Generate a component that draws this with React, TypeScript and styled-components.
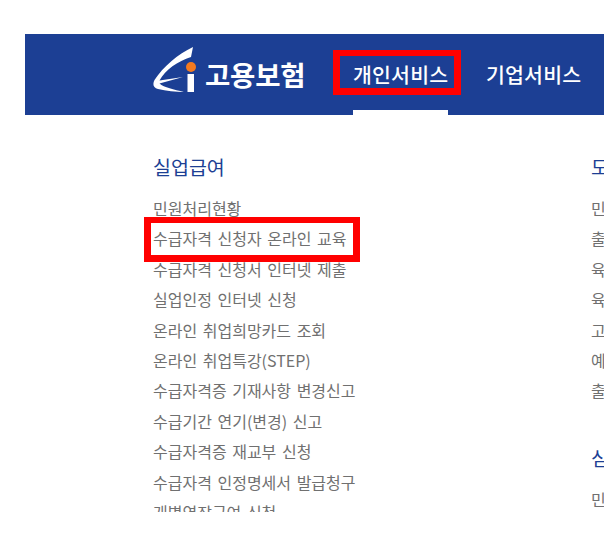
import styled, { createGlobalStyle } from "styled-components";

const GlobalStyle = createGlobalStyle`
  html, body {
    margin: 0;
    padding: 0;
    background: #fff;
    font-family: "Noto Sans CJK KR", "Noto Sans", sans-serif;
  }
`;

const Page = styled.div`
  position: relative;
  width: 611px;
  height: 549px;
  padding: 34px 7px 0 25px;
  box-sizing: border-box;
  overflow: hidden;
`;

const Frame = styled.div`
  height: 478px;
  overflow: hidden;
`;

const Header = styled.header`
  display: flex;
  align-items: center;
  height: 81px;
  padding-left: 128px;
  background: #1c3f94;
  box-shadow: 0 -1px 0 #9db4d8;
`;

const Logo = styled.div`
  display: flex;
  align-items: center;
  width: 200px;
  gap: 6px;
`;

const LogoSvg = styled.svg`
  flex: none;
  margin-bottom: 9px;
`;

const LogoText = styled.span`
  color: #fff;
  font-size: 27.5px;
  font-weight: 700;
  letter-spacing: -0.2px;
  white-space: nowrap;
  line-height: 1;
  margin-top: 1px;
`;

const Nav = styled.nav`
  display: flex;
  gap: 38px;
  height: 100%;
`;

const NavItem = styled.a<{ $active?: boolean }>`
  display: flex;
  align-items: center;
  color: #fff;
  font-size: 20.5px;
  font-weight: 500;
  letter-spacing: 0.2px;
  white-space: nowrap;
  padding-top: 4px;
  box-sizing: border-box;
  height: 81px;
  width: 95px;
  border-bottom: 5px solid ${(p) => (p.$active ? "#fff" : "transparent")};
`;

const Columns = styled.div`
  display: flex;
  padding: 35px 0 0 128px;
`;

const Column = styled.section`
  flex: 0 0 438px;
`;

const Group = styled.div`
  margin-bottom: 35px;
`;

const Title = styled.h2`
  margin: 0 0 9px;
  color: #1c3f94;
  font-size: 19.5px;
  font-weight: 400;
  line-height: 34px;
  white-space: nowrap;
`;

const Items = styled.ul`
  margin: 0;
  padding: 0;
  list-style: none;
`;

const Item = styled.li`
  color: #707070;
  font-size: 16px;
  word-spacing: 2px;
  line-height: 30.4px;
  white-space: nowrap;
`;

const Highlight = styled.div<{ $x: number; $y: number; $w: number; $h: number }>`
  position: absolute;
  left: ${(p) => p.$x}px;
  top: ${(p) => p.$y}px;
  width: ${(p) => p.$w}px;
  height: ${(p) => p.$h}px;
  box-sizing: border-box;
  border: solid #f00;
  border-width: 6px 7px 7px;
`;

const LeftItems = [
  "민원처리현황",
  "수급자격 신청자 온라인 교육",
  "수급자격 신청서 인터넷 제출",
  "실업인정 인터넷 신청",
  "온라인 취업희망카드 조회",
  "온라인 취업특강(STEP)",
  "수급자격증 기재사항 변경신고",
  "수급기간 연기(변경) 신고",
  "수급자격증 재교부 신청",
  "수급자격 인정명세서 발급청구",
  "개별연장급여 신청",
];

const RightItems = [
  "민원처리현황",
  "출산전후휴가 급여 신청",
  "육아휴직 급여 신청",
  "육아기 근로시간 단축 급여",
  "고용보험 미적용자 출산급여",
  "예술인 출산전후급여",
  "출산전후휴가 확인서",
];

function LogoMark() {
  return (
    <LogoSvg width="46" height="48" viewBox="5 4 46 48">
      <path
        d="M45 5 C30 12 15 25 6.500 38 C4.500 42 5 46 10 47 C18 49 28 50 36 50 C26 47.500 16 45.500 11.500 41.500 L35 35 L11.500 38.500 C17 28 30 19 43 15 Z"
        fill="#fff"
      />
      <circle cx="43" cy="25" r="5" fill="#f47a20" />
      <rect x="39.500" y="32" width="6.500" height="18" fill="#fff" />
    </LogoSvg>
  );
}

export default function App() {
  return (
    <>
      <GlobalStyle />
      <Page>
        <Frame>
          <Header>
            <Logo>
              <LogoMark />
              <LogoText>고용보험</LogoText>
            </Logo>
            <Nav>
              <NavItem $active>개인서비스</NavItem>
              <NavItem>기업서비스</NavItem>
            </Nav>
          </Header>
          <Columns>
            <Column>
              <Title>실업급여</Title>
              <Items>
                {LeftItems.map((t) => (
                  <Item key={t}>{t}</Item>
                ))}
              </Items>
            </Column>
            <Column>
              <Group>
                <Title>모성보호</Title>
                <Items>
                  {RightItems.map((t) => (
                    <Item key={t}>{t}</Item>
                  ))}
                </Items>
              </Group>
              <Title>심사청구</Title>
              <Items>
                <Item>민원처리현황</Item>
              </Items>
            </Column>
          </Columns>
        </Frame>
        <Highlight $x={333} $y={50} $w={128} $h={45} />
        <Highlight $x={144} $y={217} $w={216} $h={45} />
      </Page>
    </>
  );
}
